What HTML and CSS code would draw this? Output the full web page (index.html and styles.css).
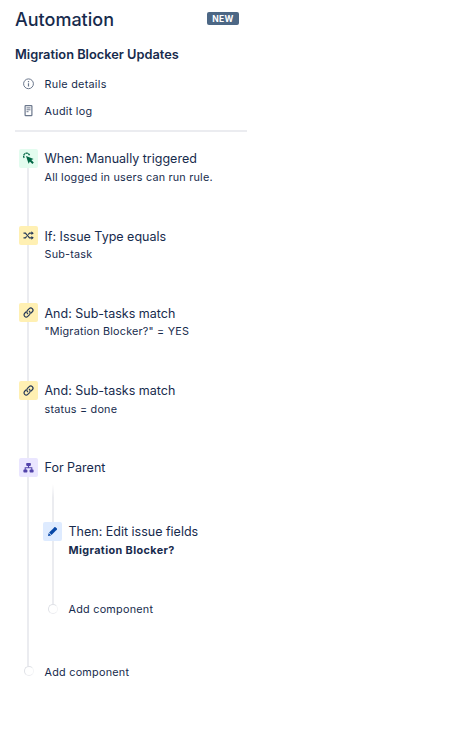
FILE: index.html
```html
<!DOCTYPE html>
<html lang="en">
<head>
  <meta charset="UTF-8" />
  <meta name="viewport" content="width=device-width, initial-scale=1.0"/>
  <title>Automation</title>
  <link rel="stylesheet" href="styles.css">
</head>
<body>

  <div class="sidebar">
    <header>
      <h1>Automation</h1>
      <span class="badge">NEW</span>
    </header>

    <h2>Migration Blocker Updates</h2>

    <nav>
      <a class="nav-item">
        <svg width="12" height="12" viewBox="0 0 12 12" fill="none" stroke="#6b778c">
          <circle cx="5.5" cy="5.8" r="4.9"/>
          <path d="M5.5 5.2v3.2M5.5 3v1.2" stroke-width="1.2"/>
        </svg>
        <span>Rule details</span>
      </a>
      <a class="nav-item">
        <svg width="12" height="12" viewBox="0 0 12 12" fill="none" stroke="#6b778c">
          <rect x="2.1" y="0.7" width="6.8" height="10" rx="0.6" stroke-width="1.2"/>
          <path d="M3.5 2.9h4M3.5 4.8h4M3.5 6.7h2" stroke-width="1"/>
        </svg>
        <span>Audit log</span>
      </a>
    </nav>

    <div class="rule">
      <div class="step">
        <div class="rail">
          <div class="icon green">
            <svg width="19" height="19" viewBox="0 0 19 19">
              <path d="M5.2 8.9A3 3 0 1 1 10.5 6.3" fill="none" stroke="#006644" stroke-width="1.3" stroke-dasharray="2.2 0.5"/>
              <path d="M7 7l7.6 2.9-2.3 1.2 2.5 2.5-1.4 1.4-2.5-2.5-1.3 2.2z" fill="#006644"/>
            </svg>
          </div>
          <div class="line"></div>
        </div>
        <div class="text">
          <h3>When: Manually triggered</h3>
          <p>All logged in users can run rule.</p>
        </div>
      </div>

      <div class="step tight">
        <div class="rail">
          <div class="icon yellow">
            <svg width="19" height="19" viewBox="0 0 19 19">
              <path d="M4.5 7.2h1.9l4.1 4.6h2.5M4.5 11.8h1.9l1.3-1.4M9.2 8.6l1.3-1.4h2.5" fill="none" stroke="#253858" stroke-width="1.2"/>
              <path d="M12.4 5.3l2.4 1.9-2.4 1.9zM12.4 9.9l2.4 1.9-2.4 1.9z" fill="#253858"/>
            </svg>
          </div>
          <div class="line"></div>
        </div>
        <div class="text">
          <h3>If: Issue Type equals</h3>
          <p>Sub-task</p>
        </div>
      </div>

      <div class="step tight">
        <div class="rail">
          <div class="icon yellow">
            <svg width="19" height="19" viewBox="0 0 19 19" fill="none" stroke="#253858" stroke-width="1.2">
              <g transform="rotate(-45 9.5 9.5)">
                <path d="M8.6 7.3H6.3a2.2 2.2 0 0 0 0 4.4h2.5a2.2 2.2 0 0 0 2-3"/>
                <path d="M10.4 11.7h2.3a2.2 2.2 0 0 0 0-4.4h-2.5a2.2 2.2 0 0 0-2 3"/>
              </g>
            </svg>
          </div>
          <div class="line"></div>
        </div>
        <div class="text">
          <h3>And: Sub-tasks match</h3>
          <p>"Migration Blocker?" = YES</p>
        </div>
      </div>

      <div class="step">
        <div class="rail">
          <div class="icon yellow">
            <svg width="19" height="19" viewBox="0 0 19 19" fill="none" stroke="#253858" stroke-width="1.2">
              <g transform="rotate(-45 9.5 9.5)">
                <path d="M8.6 7.3H6.3a2.2 2.2 0 0 0 0 4.4h2.5a2.2 2.2 0 0 0 2-3"/>
                <path d="M10.4 11.7h2.3a2.2 2.2 0 0 0 0-4.4h-2.5a2.2 2.2 0 0 0-2 3"/>
              </g>
            </svg>
          </div>
          <div class="line"></div>
        </div>
        <div class="text">
          <h3>And: Sub-tasks match</h3>
          <p>status = done</p>
        </div>
      </div>

      <div class="step parent">
        <div class="rail">
          <div class="icon purple">
            <svg width="19" height="19" viewBox="0 0 19 19" fill="#5243aa">
              <rect x="7.2" y="4.9" width="4.7" height="3" rx="0.8"/>
              <rect x="4.4" y="11.6" width="4" height="2.9" rx="0.8"/>
              <rect x="10.6" y="11.6" width="4" height="2.9" rx="0.8"/>
              <path d="M9.5 7.5v2.2M6.2 12v-2.2h6.6v2.2" fill="none" stroke="#5243aa" stroke-width="1.1"/>
            </svg>
          </div>
          <div class="line"></div>
        </div>
        <div class="text">
          <h3>For Parent</h3>
          <div class="branch">
            <div class="line fade"></div>
            <div class="step">
              <div class="rail">
                <div class="icon blue">
                  <svg width="19" height="19" viewBox="0 0 19 19" fill="#0747a6">
                    <path d="M5 14l0.7-3 2.4 2.4zM10.8 5.8l0.7-0.6q0.5-0.4 1 0l1.4 1.4q0.4 0.5 0 1l-0.6 0.7z"/>
                    <path d="M6.1 10.6l5.2-5.2 2.4 2.4-5.2 5.2z"/>
                  </svg>
                </div>
                <div class="line"></div>
              </div>
              <div class="text">
                <h3>Then: Edit issue fields</h3>
                <p><b>Migration Blocker?</b></p>
              </div>
            </div>
            <div class="add">
              <div class="rail"><span class="dot"></span></div>
              <span class="label">Add component</span>
            </div>
          </div>
        </div>
      </div>

      <div class="add">
        <div class="rail"><span class="dot"></span></div>
        <span class="label">Add component</span>
      </div>
    </div>
  </div>

</body>
</html>
```

FILE: styles.css
```css
* { box-sizing: border-box; margin: 0; padding: 0; }
body {
  min-height: 100vh;
  font-family: Inter, sans-serif;
  background: #fff;
  color: #172b4d;
}
.sidebar {
  width: 247px;
  padding: 0 0 50px 15px;
}
header {
  display: flex;
  justify-content: space-between;
  padding: 8px 8px 0 0;
  height: 43px;
}
h1 {
  font-size: 18px;
  line-height: 24px;
  font-weight: 500;
}
.badge {
  width: 32px;
  height: 13px;
  margin-top: 4px;
  border-radius: 2px;
  background: #4c6785;
  color: #fff;
  font-size: 8.5px;
  line-height: 14px;
  font-weight: 700;
  letter-spacing: 0.4px;
  text-align: center;
}
h2 {
  font-size: 12.8px;
  line-height: 24px;
  font-weight: 600;
}
nav {
  height: 65px;
  padding: 3px 0 0 8px;
  border-bottom: 2px solid #ebecf0;
}
.nav-item {
  display: flex;
  align-items: center;
  gap: 9.5px;
  height: 27px;
  font-size: 10.8px;
  letter-spacing: 0.28px;
}
.nav-item span {
  padding-top: 2px;
}
.rule {
  padding: 17px 0 0 4px;
}
.step {
  display: flex;
  gap: 6.5px;
  height: 77px;
}
.step:nth-child(3) {
  height: 78px;
}
.step.parent {
  height: 208px;
}
.rail {
  display: flex;
  flex-direction: column;
  align-items: center;
  flex: none;
  width: 19px;
}
.icon {
  width: 19px;
  height: 19px;
  border-radius: 2px;
}
.icon svg {
  display: block;
}
.green { background: #e3fcef; }
.yellow { background: #fff0b3; }
.purple { background: #eae6ff; }
.blue { background: #deebff; }
.line {
  flex: 1;
  width: 2px;
  margin-right: 1px;
  background: #ebecf0;
}
.text {
  white-space: nowrap;
}
h3 {
  font-size: 12.5px;
  line-height: 19px;
  font-weight: 400;
}
.tight h3 {
  padding-top: 1px;
}
p {
  font-size: 10.8px;
  line-height: 20px;
  letter-spacing: 0.21px;
}
.tight p {
  line-height: 18px;
}
p b {
  letter-spacing: 0.4px;
}
.branch {
  margin: 7px 0 0 -1.5px;
}
.branch .line {
  margin-right: 0;
}
.fade {
  height: 38px;
  margin-left: 9px;
  background: linear-gradient(#fff, #ebecf0 35%);
}
.branch .step {
  height: 82px;
}
.add {
  display: flex;
  align-items: center;
  gap: 6.5px;
  height: 10px;
  font-size: 10.8px;
  line-height: 14px;
  letter-spacing: 0.25px;
}
.label {
  padding-top: 2px;
}
.rule > .add .label {
  padding-top: 3px;
}
.dot {
  width: 10px;
  height: 10px;
  border: 1px solid #dfe1e6;
  border-right-color: #f4f5f7;
  border-bottom-color: #ebecf0;
  border-radius: 50%;
}
```
